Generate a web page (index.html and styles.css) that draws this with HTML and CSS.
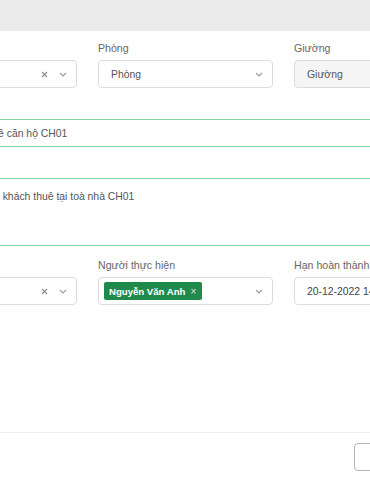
FILE: index.html
```html
<!DOCTYPE html>
<html lang="vi">
<head>
<meta charset="utf-8">
<link rel="stylesheet" href="styles.css">
</head>
<body>
<div class="modal">
  <div class="topbar"></div>
  <div class="modal-body">
    <div class="form">
      <div class="row row-3">
        <div class="field">
          <label class="label">Căn hộ</label>
          <div class="select">
            <span class="value">CH01</span>
            <span class="icons">
              <svg class="clear" width="7" height="7" viewBox="0 0 7 7"><path d="M1 1L6 6M6 1L1 6" stroke="#8c8c8c" stroke-width="1.1"/></svg>
              <svg class="chev" width="8" height="5" viewBox="0 0 8 5"><path d="M1 1L4 4L7 1" fill="none" stroke="#999" stroke-width="1.1"/></svg>
            </span>
          </div>
        </div>
        <div class="field">
          <label class="label">Phòng</label>
          <div class="select">
            <span class="value">Phòng</span>
            <span class="icons">
              <svg class="chev" width="8" height="5" viewBox="0 0 8 5"><path d="M1 1L4 4L7 1" fill="none" stroke="#999" stroke-width="1.1"/></svg>
            </span>
          </div>
        </div>
        <div class="field">
          <label class="label">Giường</label>
          <div class="select disabled">
            <span class="value">Giường</span>
          </div>
        </div>
      </div>

      <div class="row">
        <div class="field">
          <label class="label">Tiêu đề</label>
          <div class="input focus">Hợp đồng cho thuê căn hộ CH01</div>
        </div>
      </div>

      <div class="row">
        <div class="field">
          <label class="label">Mô tả</label>
          <div class="textarea focus">Hỗ trợ vệ sinh cho khách thuê tại toà nhà CH01</div>
        </div>
      </div>

      <div class="row row-3">
        <div class="field">
          <label class="label">Loại công việc</label>
          <div class="select">
            <span class="value">Dọn dẹp</span>
            <span class="icons">
              <svg class="clear" width="7" height="7" viewBox="0 0 7 7"><path d="M1 1L6 6M6 1L1 6" stroke="#8c8c8c" stroke-width="1.1"/></svg>
              <svg class="chev" width="8" height="5" viewBox="0 0 8 5"><path d="M1 1L4 4L7 1" fill="none" stroke="#999" stroke-width="1.1"/></svg>
            </span>
          </div>
        </div>
        <div class="field">
          <label class="label">Người thực hiện</label>
          <div class="select multi">
            <span class="tag">Nguyễn Văn Anh <span class="tag-x">×</span></span>
            <span class="icons">
              <svg class="chev" width="8" height="5" viewBox="0 0 8 5"><path d="M1 1L4 4L7 1" fill="none" stroke="#999" stroke-width="1.1"/></svg>
            </span>
          </div>
        </div>
        <div class="field">
          <label class="label">Hạn hoàn thành</label>
          <div class="select">
            <span class="value dark">20-12-2022 14:00</span>
          </div>
        </div>
      </div>
    </div>
  </div>
  <div class="footer">
    <button class="btn">Huỷ</button>
  </div>
</div>
</body>
</html>
```

FILE: styles.css
```css
* { box-sizing: border-box; }
html, body { margin: 0; padding: 0; }
body {
  width: 370px;
  height: 480px;
  overflow: hidden;
  background: #fff;
  font-family: "Liberation Sans", Arial, Helvetica, sans-serif;
  font-size: 10.4px;
  color: #555;
}
.modal {
  height: 480px;
  display: flex;
  flex-direction: column;
}
.topbar {
  height: 31px;
  background: #ebebeb;
  flex: none;
}
.modal-body {
  flex: 1;
  padding-top: 10px;
  overflow: hidden;
}
.form {
  margin-left: -98px;
  width: 567px;
  display: flex;
  flex-direction: column;
  gap: 12px;
}
.row-3 {
  display: grid;
  grid-template-columns: 175px 175px 175px;
  column-gap: 21px;
}
.field {
  display: flex;
  flex-direction: column;
  gap: 5px;
}
.label {
  display: block;
  height: 14px;
  line-height: 14px;
  color: #666;
  font-size: 10.6px;
}
.select {
  height: 28px;
  border: 1px solid #dcdcdc;
  border-radius: 4px;
  display: flex;
  align-items: center;
  padding: 0 9px 0 12px;
  background: #fff;
}
.select.disabled { background: #f5f5f5; }
.select.multi { padding-left: 5px; }
.value { flex: 1; color: #555; white-space: nowrap; }
.value.dark { color: #444; }
.icons {
  display: flex;
  align-items: center;
  gap: 11px;
  margin-left: auto;
}
.clear, .chev { display: block; }
.tag {
  height: 18px;
  background: #208a4d;
  color: #fff;
  border-radius: 2px;
  padding: 0 6px 0 5px;
  display: flex;
  align-items: center;
  font-weight: bold;
  font-size: 9.6px;
  white-space: nowrap;
}
.tag-x {
  font-weight: normal;
  font-size: 10px;
  margin-left: 5px;
  color: #d9efe1;
}
.input {
  height: 28px;
  border: 1px solid #82d6a4;
  border-radius: 4px;
  padding: 0 12px;
  display: flex;
  align-items: center;
  white-space: nowrap;
  color: #555;
}
.textarea {
  height: 68px;
  border: 1px solid #82d6a4;
  border-radius: 4px;
  padding: 11px 12px 10px;
  line-height: 14px;
  white-space: nowrap;
  color: #555;
}
.footer {
  flex: none;
  height: 48px;
  border-top: 1px solid #efefef;
  display: flex;
  align-items: flex-start;
  padding: 10px 0 0 354px;
}
.btn {
  height: 28px;
  width: 60px;
  border: 1px solid #b3b3b3;
  border-radius: 4px;
  background: #fff;
  font-family: inherit;
  font-size: 10.4px;
  color: #444;
  flex: none;
}
```
